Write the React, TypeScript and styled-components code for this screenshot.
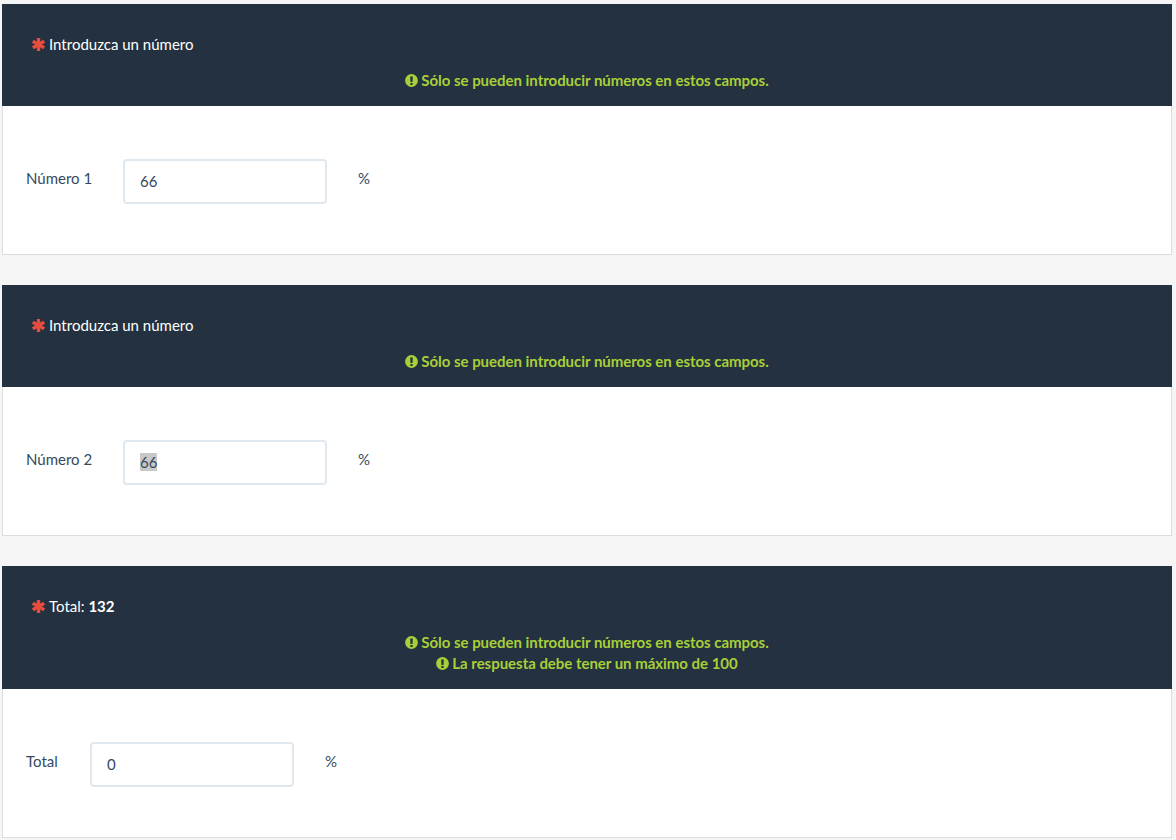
import { FC, ReactNode, useEffect, useRef } from "react";
import styled, { createGlobalStyle } from "styled-components";

const ONLY_NUMBERS = "Sólo se pueden introducir números en estos campos.";

type QuestionPropsType = {
  title: ReactNode;
  alerts: string[];
  label: string;
  labelWidth: number;
  value: string;
  selected?: boolean;
};

const AsteriskGlyph: FC = () => (
  <RequiredIcon viewBox="0 0 13 13" aria-hidden="true">
    <path d="M6.5 0v13M.8 3.2l11.4 6.6M.8 9.8l11.4-6.6" />
  </RequiredIcon>
);

const ExclamationGlyph: FC = () => (
  <AlertIcon viewBox="0 0 13 13" aria-hidden="true">
    <path
      fillRule="evenodd"
      d="M6.5.1a6.4 6.4 0 1 1 0 12.8a6.4 6.4 0 0 1 0-12.8zM5.2 2.4l.25 5.6h2.1l.25-5.6zM5.4 9v2h2.2V9z"
    />
  </AlertIcon>
);

const Question: FC<QuestionPropsType> = ({
  title,
  alerts,
  label,
  labelWidth,
  value,
  selected,
}) => {
  const inputRef = useRef<HTMLInputElement>(null);

  useEffect(() => {
    if (selected) inputRef.current?.select();
  }, [selected]);

  return (
    <Panel>
      <PanelHeader>
        <Title>
          <AsteriskGlyph />
          {title}
        </Title>
        {alerts.map((alert) => (
          <Alert key={alert}>
            <ExclamationGlyph />
            {alert}
          </Alert>
        ))}
      </PanelHeader>
      <PanelBody>
        <FieldLabel $width={labelWidth}>{label}</FieldLabel>
        <NumberInput ref={inputRef} type="text" defaultValue={value} />
        <Unit>%</Unit>
      </PanelBody>
    </Panel>
  );
};

const App: FC = () => (
  <>
    <GlobalStyle />
    <Page>
      <Question
        title="Introduzca un número"
        alerts={[ONLY_NUMBERS]}
        label="Número 1"
        labelWidth={65}
        value="66"
      />
      <Question
        title="Introduzca un número"
        alerts={[ONLY_NUMBERS]}
        label="Número 2"
        labelWidth={65}
        value="66"
        selected
      />
      <Question
        title={
          <>
            Total: <strong>132</strong>
          </>
        }
        alerts={[ONLY_NUMBERS, "La respuesta debe tener un máximo de 100"]}
        label="Total"
        labelWidth={32}
        value="0"
      />
    </Page>
  </>
);

export default App;

const GlobalStyle = createGlobalStyle`
  html, body {
    margin: 0;
    background: #f5f5f5;
  }
  body {
    font-family: Lato, "Liberation Sans", sans-serif;
    font-size: 15px;
    line-height: 21px;
    color: #34495e;
  }
`;

const Page = styled.div`
  display: flex;
  flex-direction: column;
  gap: 30px;
  box-sizing: border-box;
  min-height: 840px;
  padding: 4px 4px 2px 2px;
`;

const Panel = styled.section`
  background: #fff;
`;

const PanelHeader = styled.div`
  display: flex;
  flex-direction: column;
  padding: 30px 30px 15px;
  background: #233140;
`;

const Title = styled.div`
  display: flex;
  align-items: center;
  height: 21px;
  margin-bottom: 15px;
  color: #fff;
  white-space: pre;

  strong {
    font-weight: 700;
  }
`;

const RequiredIcon = styled.svg`
  flex: none;
  width: 13px;
  height: 13px;
  margin-right: 4px;
  fill: none;
  stroke: #e74c3c;
  stroke-width: 3.4;
`;

const Alert = styled.div`
  display: flex;
  align-items: center;
  justify-content: center;
  height: 21px;
  font-weight: 700;
  letter-spacing: -0.03px;
  color: #a8cf38;
`;

const AlertIcon = styled.svg`
  flex: none;
  width: 13px;
  height: 13px;
  margin-right: 3px;
  fill: currentColor;
`;

const PanelBody = styled.div`
  display: flex;
  align-items: flex-start;
  gap: 32px;
  padding: 53px 23px 50px;
  border: 1px solid #ddd;
  border-top: none;
`;

const FieldLabel = styled.label<{ $width: number }>`
  flex: none;
  width: ${(props) => props.$width}px;
  padding-top: 9px;
  white-space: nowrap;
`;

const NumberInput = styled.input`
  box-sizing: border-box;
  width: 204px;
  height: 45px;
  margin-right: -1px;
  padding: 0 15px 2px;
  border: 2px solid #dfe7ef;
  border-radius: 4px;
  outline: none;
  background: #fff;
  font-family: inherit;
  font-size: 15px;
  color: #34495e;

  &::selection {
    background: #c8c8c8;
    color: #34495e;
  }
`;

const Unit = styled.span`
  padding-top: 9px;
`;
